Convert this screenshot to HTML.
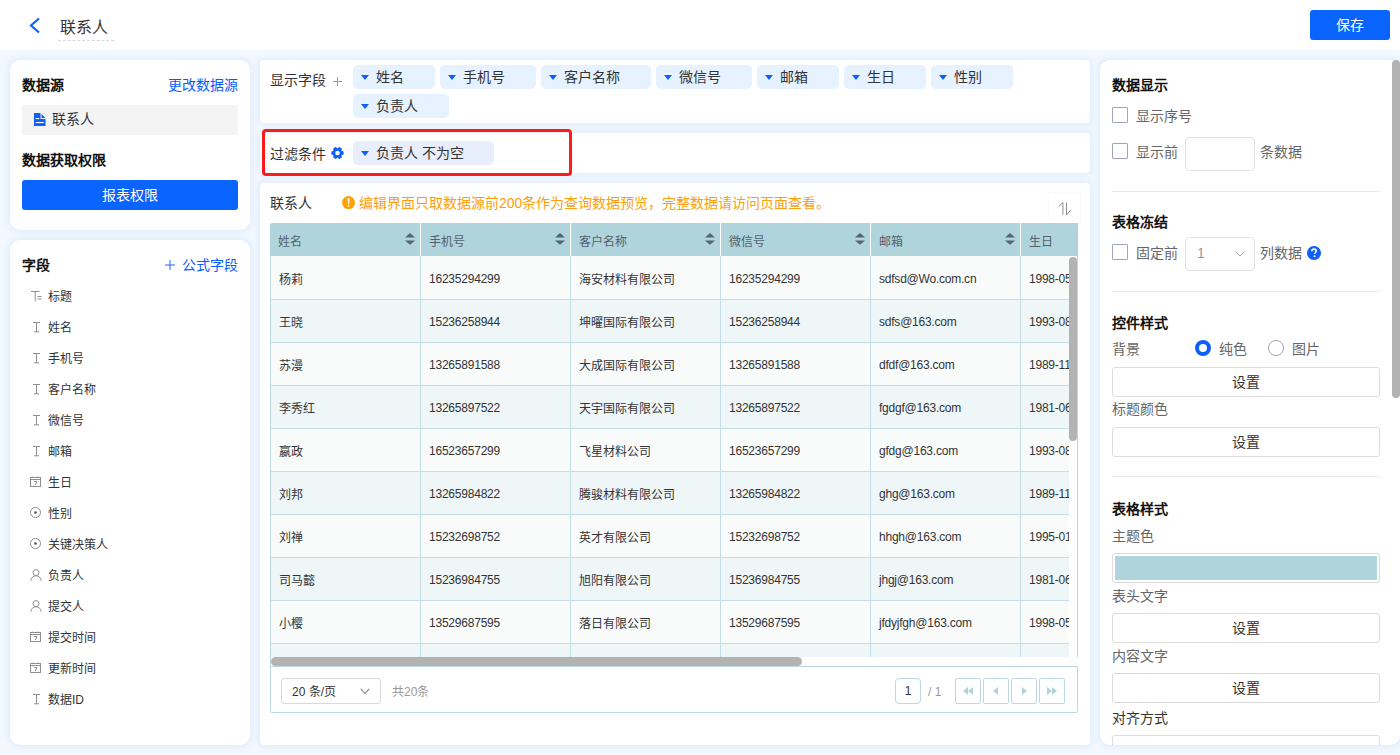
<!DOCTYPE html>
<html lang="zh-CN"><head><meta charset="utf-8">
<style>
*{box-sizing:border-box;margin:0;padding:0}
html,body{width:1400px;height:755px;overflow:hidden}
body{font-family:"Liberation Sans",sans-serif;background:#f2f8fe;color:#333;position:relative;font-size:14px}
.abs{position:absolute}
.t{position:absolute;white-space:nowrap;line-height:1}
.panel{position:absolute;background:#fff;border-radius:10px;box-shadow:0 0 6px 1px rgba(214,232,253,.9)}
.hdr{position:absolute;left:0;top:0;width:1400px;height:50px;background:#fff}
.b{font-weight:bold;color:#111}
.blue{color:#0a5cff}
.fi{position:absolute;left:20px;height:14px}
.fi svg{position:absolute;left:0;top:0}
.fi span{position:absolute;left:18px;top:1px;font-size:12px;line-height:1;white-space:nowrap;color:#333}
.tag{position:absolute;height:24px;background:#e6f2ff;border-radius:5px}
.tag i{position:absolute;left:8px;top:10px;width:0;height:0;border-left:4.5px solid transparent;border-right:4.5px solid transparent;border-top:5px solid #0f5fff}
.tag span{position:absolute;left:23px;top:5px;font-size:14px;line-height:1;color:#333;white-space:nowrap}
.th{position:absolute;top:0;height:33px;background:#afd4dc}
.th span{position:absolute;left:8px;top:13px;font-size:12px;line-height:1;color:#556070;white-space:nowrap}
.sort{position:absolute;right:5px;top:10px}
.cell{position:absolute;margin-top:1px;font-size:12px;line-height:1;color:#333;white-space:nowrap}
.num{margin-top:0;letter-spacing:-0.22px}
.chk{position:absolute;width:16px;height:16px;border:1px solid #a0a6b8;border-radius:1px;background:#fff}
.lbl{position:absolute;font-size:14px;line-height:1;color:#666;white-space:nowrap}
.btn{position:absolute;left:12px;width:268px;height:30px;border:1px solid #dcdcdc;border-radius:3px;background:#fff;text-align:center;font-size:14px;line-height:28px;color:#333}
.hr{position:absolute;left:12px;width:268px;height:1px;background:#e8e8e8}
.pbtn{position:absolute;top:11px;width:26px;height:26px;border:1px solid #bcd9e0;border-radius:2px;background:#fff}
</style></head><body>
<div class="hdr">
  <svg class="abs" style="left:28px;top:17px" width="13" height="17" viewBox="0 0 13 17"><path d="M11 1.5 L3 8.5 L11 15.5" fill="none" stroke="#0f5fff" stroke-width="2.2"/></svg>
  <div class="t" style="left:60px;top:20px;font-size:16px;color:#333">联系人</div>
  <div class="abs" style="left:58px;top:40px;width:56px;border-top:1px dashed #d9d9d9"></div>
  <div class="abs" style="left:1310px;top:10px;width:80px;height:30px;background:#0a64ff;border-radius:3px;color:#fff;font-size:14px;text-align:center;line-height:30px">保存</div>
</div>

<div class="panel" style="left:10px;top:60px;width:240px;height:170px">
  <div class="t b" style="left:12px;top:18px">数据源</div>
  <div class="t blue" style="left:158px;top:18px">更改数据源</div>
  <div class="abs" style="left:12px;top:45px;width:216px;height:30px;background:#f4f4f5;border-radius:2px"></div>
  <svg class="abs" style="left:23.5px;top:53px" width="12" height="13" viewBox="0 0 12 13"><path d="M0 0H6.5V6H11.5V13H0Z M7.5 1V5H11.5Z" fill="#0f5fff"/><rect x="1.7" y="5" width="3.5" height="1.1" fill="#fff"/><rect x="1.7" y="9" width="8" height="1.1" fill="#fff"/></svg>
  <div class="t" style="left:42px;top:52px;color:#333">联系人</div>
  <div class="t b" style="left:12px;top:93px">数据获取权限</div>
  <div class="abs" style="left:12px;top:120px;width:216px;height:30px;background:#0a64ff;border-radius:3px;color:#fff;text-align:center;line-height:30px">报表权限</div>
</div>

<div class="panel" style="left:10px;top:240px;width:240px;height:505px">
<div class="t b" style="left:12px;top:18px">字段</div>
<svg class="abs" style="left:155px;top:20px" width="10" height="10" viewBox="0 0 10 10"><path d="M5 0V10M0 5H10" stroke="#1f66ff" stroke-width="1"/></svg><div class="t blue" style="left:172px;top:18px">公式字段</div>
<div class="fi" style="top:50px"><svg width="12" height="12" viewBox="0 0 12 12"><path d="M1 1.5H9.5M5.2 1.5V11.5M7.5 6.5H11.5M7.5 9H11.5" stroke="#8f8f8f" stroke-width="1" fill="none"/></svg><span>标题</span></div>
<div class="fi" style="top:81px"><svg width="12" height="12" viewBox="0 0 12 12"><path d="M3 1.5H10M6.5 1.5V10.8M4 10.8H9" stroke="#8f8f8f" stroke-width="1" fill="none"/></svg><span>姓名</span></div>
<div class="fi" style="top:112px"><svg width="12" height="12" viewBox="0 0 12 12"><path d="M3 1.5H10M6.5 1.5V10.8M4 10.8H9" stroke="#8f8f8f" stroke-width="1" fill="none"/></svg><span>手机号</span></div>
<div class="fi" style="top:143px"><svg width="12" height="12" viewBox="0 0 12 12"><path d="M3 1.5H10M6.5 1.5V10.8M4 10.8H9" stroke="#8f8f8f" stroke-width="1" fill="none"/></svg><span>客户名称</span></div>
<div class="fi" style="top:174px"><svg width="12" height="12" viewBox="0 0 12 12"><path d="M3 1.5H10M6.5 1.5V10.8M4 10.8H9" stroke="#8f8f8f" stroke-width="1" fill="none"/></svg><span>微信号</span></div>
<div class="fi" style="top:205px"><svg width="12" height="12" viewBox="0 0 12 12"><path d="M3 1.5H10M6.5 1.5V10.8M4 10.8H9" stroke="#8f8f8f" stroke-width="1" fill="none"/></svg><span>邮箱</span></div>
<div class="fi" style="top:236px"><svg width="12" height="12" viewBox="0 0 12 12"><rect x="0.5" y="1.5" width="10" height="9" fill="none" stroke="#8f8f8f" stroke-width="1"/><path d="M0.5 3.5H10.5M3 0.5V2M8 0.5V2M4 5.5H7L5.2 9" stroke="#8f8f8f" stroke-width="1" fill="none"/></svg><span>生日</span></div>
<div class="fi" style="top:267px"><svg width="12" height="12" viewBox="0 0 12 12"><circle cx="5.5" cy="5.5" r="5" fill="none" stroke="#8f8f8f" stroke-width="1"/><circle cx="5.5" cy="5.5" r="1.3" fill="#555"/></svg><span>性别</span></div>
<div class="fi" style="top:298px"><svg width="12" height="12" viewBox="0 0 12 12"><circle cx="5.5" cy="5.5" r="5" fill="none" stroke="#8f8f8f" stroke-width="1"/><circle cx="5.5" cy="5.5" r="1.3" fill="#555"/></svg><span>关键决策人</span></div>
<div class="fi" style="top:329px"><svg width="12" height="12" viewBox="0 0 12 12"><circle cx="6" cy="3.6" r="3" fill="none" stroke="#8f8f8f" stroke-width="1"/><path d="M0.8 11.8C1.2 8.5 3.2 6.8 6 6.8S10.8 8.5 11.2 11.8" fill="none" stroke="#8f8f8f" stroke-width="1"/></svg><span>负责人</span></div>
<div class="fi" style="top:360px"><svg width="12" height="12" viewBox="0 0 12 12"><circle cx="6" cy="3.6" r="3" fill="none" stroke="#8f8f8f" stroke-width="1"/><path d="M0.8 11.8C1.2 8.5 3.2 6.8 6 6.8S10.8 8.5 11.2 11.8" fill="none" stroke="#8f8f8f" stroke-width="1"/></svg><span>提交人</span></div>
<div class="fi" style="top:391px"><svg width="12" height="12" viewBox="0 0 12 12"><rect x="0.5" y="1.5" width="10" height="9" fill="none" stroke="#8f8f8f" stroke-width="1"/><path d="M0.5 3.5H10.5M3 0.5V2M8 0.5V2M4 5.5H7L5.2 9" stroke="#8f8f8f" stroke-width="1" fill="none"/></svg><span>提交时间</span></div>
<div class="fi" style="top:422px"><svg width="12" height="12" viewBox="0 0 12 12"><rect x="0.5" y="1.5" width="10" height="9" fill="none" stroke="#8f8f8f" stroke-width="1"/><path d="M0.5 3.5H10.5M3 0.5V2M8 0.5V2M4 5.5H7L5.2 9" stroke="#8f8f8f" stroke-width="1" fill="none"/></svg><span>更新时间</span></div>
<div class="fi" style="top:453px"><svg width="12" height="12" viewBox="0 0 12 12"><path d="M3 1.5H10M6.5 1.5V10.8M4 10.8H9" stroke="#8f8f8f" stroke-width="1" fill="none"/></svg><span>数据ID</span></div>
</div>
<div class="panel" style="left:260px;top:60px;width:830px;height:63px;border-radius:4px">
<div class="t" style="left:10px;top:13px">显示字段</div><svg class="abs" style="left:73px;top:17px" width="9" height="9" viewBox="0 0 9 9"><path d="M4.5 0V9M0 4.5H9" stroke="#999" stroke-width="1"/></svg>
<div class="tag" style="left:93px;top:5px;width:82px"><i></i><span>姓名</span></div>
<div class="tag" style="left:180px;top:5px;width:96px"><i></i><span>手机号</span></div>
<div class="tag" style="left:281px;top:5px;width:110px"><i></i><span>客户名称</span></div>
<div class="tag" style="left:396px;top:5px;width:96px"><i></i><span>微信号</span></div>
<div class="tag" style="left:497px;top:5px;width:82px"><i></i><span>邮箱</span></div>
<div class="tag" style="left:584px;top:5px;width:82px"><i></i><span>生日</span></div>
<div class="tag" style="left:671px;top:5px;width:82px"><i></i><span>性别</span></div>
<div class="tag" style="left:93px;top:34px;width:96px"><i></i><span>负责人</span></div>
</div>
<div class="panel" style="left:260px;top:133px;width:830px;height:40px;border-radius:4px">
<div class="t" style="left:10px;top:14px">过滤条件</div>
<svg class="abs" style="left:71px;top:14px" width="13" height="12" viewBox="0 0 13 12"><path fill="#0f5fff" fill-rule="evenodd" d="M10.48 3.70 L12.61 4.48 L12.61 7.52 L10.48 8.30 L10.48 8.30 L10.88 10.53 L8.24 12.06 L6.50 10.60 L6.50 10.60 L4.76 12.06 L2.12 10.53 L2.52 8.30 L2.52 8.30 L0.39 7.52 L0.39 4.48 L2.52 3.70 L2.52 3.70 L2.12 1.47 L4.76 -0.06 L6.50 1.40 L6.50 1.40 L8.24 -0.06 L10.88 1.47 L10.48 3.70 Z M8.80 6 A2.3 2.3 0 1 0 4.20 6 A2.3 2.3 0 1 0 8.80 6 Z"/></svg>
<div class="tag" style="left:93px;top:8px;width:141px;background:#e8eefb"><i></i><span>负责人 不为空</span></div>
</div>
<div class="abs" style="left:262px;top:129px;width:310px;height:47px;border:3px solid #ff1a1a;border-radius:4px"></div>
<div class="panel" style="left:260px;top:183px;width:830px;height:562px;border-radius:4px">
<div class="t" style="left:10px;top:13px">联系人</div>
<svg class="abs" style="left:82px;top:13px" width="13" height="13" viewBox="0 0 13 13"><circle cx="6.5" cy="6.6" r="6.5" fill="#fda20a"/><path d="M5.6 2.2H7.6L7.1 8.3H6.1Z" fill="#fff"/><rect x="5.9" y="9.2" width="1.4" height="1.3" fill="#fff"/></svg>
<div class="t" style="left:99px;top:13px;color:#fba00c">编辑界面只取数据源前200条作为查询数据预览，完整数据请访问页面查看。</div>
<div class="abs" style="left:789px;top:10px;width:31px;height:30px;background:#fff;box-shadow:0 0 3px rgba(120,100,160,.12)"><svg class="abs" style="left:9px;top:9px" width="14" height="14" viewBox="0 0 14 14"><path d="M0.8 4.5 L4.9 0.5 V12.8 M8.5 0.5 V12.8 L12.8 8" stroke="#8c8c8c" stroke-width="1" fill="none"/></svg></div>
</div>
<div class="abs" style="left:270px;top:223px;width:808px;height:490px;overflow:hidden">
<div class="th" style="left:0px;width:150px;border-left:0;border-radius:2px 0 0 0"><span>姓名</span><svg class="sort" width="10" height="12" viewBox="0 0 10 12"><path d="M5 0 L10 4.6 H0 Z M0 7.4 H10 L5 11.8 Z" fill="#556378"/></svg></div>
<div class="th" style="left:150px;width:150px;border-left:1px solid #fff;"><span>手机号</span><svg class="sort" width="10" height="12" viewBox="0 0 10 12"><path d="M5 0 L10 4.6 H0 Z M0 7.4 H10 L5 11.8 Z" fill="#556378"/></svg></div>
<div class="th" style="left:300px;width:150px;border-left:1px solid #fff;"><span>客户名称</span><svg class="sort" width="10" height="12" viewBox="0 0 10 12"><path d="M5 0 L10 4.6 H0 Z M0 7.4 H10 L5 11.8 Z" fill="#556378"/></svg></div>
<div class="th" style="left:450px;width:150px;border-left:1px solid #fff;"><span>微信号</span><svg class="sort" width="10" height="12" viewBox="0 0 10 12"><path d="M5 0 L10 4.6 H0 Z M0 7.4 H10 L5 11.8 Z" fill="#556378"/></svg></div>
<div class="th" style="left:600px;width:150px;border-left:1px solid #fff;"><span>邮箱</span><svg class="sort" width="10" height="12" viewBox="0 0 10 12"><path d="M5 0 L10 4.6 H0 Z M0 7.4 H10 L5 11.8 Z" fill="#556378"/></svg></div>
<div class="th" style="left:750px;width:200px;border-left:1px solid #fff;"><span>生日</span></div>
<div class="abs" style="left:0;top:33px;width:799px;height:401px;overflow:hidden;border-left:1px solid #bcd9e0">
<div class="abs" style="left:0;top:0;width:900px;height:1px;background:#f9fbfb"></div>
<div class="abs" style="left:0;top:1px;width:900px;height:43px;background:#f9fbfb;border-bottom:1px solid #c3dfe5"></div>
<div class="cell" style="left:8px;top:17px">杨莉</div>
<div class="cell num" style="left:158px;top:17px">16235294299</div>
<div class="cell" style="left:308px;top:17px">海安材料有限公司</div>
<div class="cell num" style="left:458px;top:17px">16235294299</div>
<div class="cell num" style="left:608px;top:17px">sdfsd@Wo.com.cn</div>
<div class="cell num" style="left:758px;top:17px">1998-05</div>
<div class="abs" style="left:0;top:44px;width:900px;height:43px;background:#eef6f8;border-bottom:1px solid #c3dfe5"></div>
<div class="cell" style="left:8px;top:60px">王晓</div>
<div class="cell num" style="left:158px;top:60px">15236258944</div>
<div class="cell" style="left:308px;top:60px">坤曜国际有限公司</div>
<div class="cell num" style="left:458px;top:60px">15236258944</div>
<div class="cell num" style="left:608px;top:60px">sdfs@163.com</div>
<div class="cell num" style="left:758px;top:60px">1993-08</div>
<div class="abs" style="left:0;top:87px;width:900px;height:43px;background:#f9fbfb;border-bottom:1px solid #c3dfe5"></div>
<div class="cell" style="left:8px;top:103px">苏漫</div>
<div class="cell num" style="left:158px;top:103px">13265891588</div>
<div class="cell" style="left:308px;top:103px">大成国际有限公司</div>
<div class="cell num" style="left:458px;top:103px">13265891588</div>
<div class="cell num" style="left:608px;top:103px">dfdf@163.com</div>
<div class="cell num" style="left:758px;top:103px">1989-11</div>
<div class="abs" style="left:0;top:130px;width:900px;height:43px;background:#eef6f8;border-bottom:1px solid #c3dfe5"></div>
<div class="cell" style="left:8px;top:146px">李秀红</div>
<div class="cell num" style="left:158px;top:146px">13265897522</div>
<div class="cell" style="left:308px;top:146px">天宇国际有限公司</div>
<div class="cell num" style="left:458px;top:146px">13265897522</div>
<div class="cell num" style="left:608px;top:146px">fgdgf@163.com</div>
<div class="cell num" style="left:758px;top:146px">1981-06</div>
<div class="abs" style="left:0;top:173px;width:900px;height:43px;background:#f9fbfb;border-bottom:1px solid #c3dfe5"></div>
<div class="cell" style="left:8px;top:189px">嬴政</div>
<div class="cell num" style="left:158px;top:189px">16523657299</div>
<div class="cell" style="left:308px;top:189px">飞星材料公司</div>
<div class="cell num" style="left:458px;top:189px">16523657299</div>
<div class="cell num" style="left:608px;top:189px">gfdg@163.com</div>
<div class="cell num" style="left:758px;top:189px">1993-08</div>
<div class="abs" style="left:0;top:216px;width:900px;height:43px;background:#eef6f8;border-bottom:1px solid #c3dfe5"></div>
<div class="cell" style="left:8px;top:232px">刘邦</div>
<div class="cell num" style="left:158px;top:232px">13265984822</div>
<div class="cell" style="left:308px;top:232px">腾骏材料有限公司</div>
<div class="cell num" style="left:458px;top:232px">13265984822</div>
<div class="cell num" style="left:608px;top:232px">ghg@163.com</div>
<div class="cell num" style="left:758px;top:232px">1989-11</div>
<div class="abs" style="left:0;top:259px;width:900px;height:43px;background:#f9fbfb;border-bottom:1px solid #c3dfe5"></div>
<div class="cell" style="left:8px;top:275px">刘禅</div>
<div class="cell num" style="left:158px;top:275px">15232698752</div>
<div class="cell" style="left:308px;top:275px">英才有限公司</div>
<div class="cell num" style="left:458px;top:275px">15232698752</div>
<div class="cell num" style="left:608px;top:275px">hhgh@163.com</div>
<div class="cell num" style="left:758px;top:275px">1995-01</div>
<div class="abs" style="left:0;top:302px;width:900px;height:43px;background:#eef6f8;border-bottom:1px solid #c3dfe5"></div>
<div class="cell" style="left:8px;top:318px">司马懿</div>
<div class="cell num" style="left:158px;top:318px">15236984755</div>
<div class="cell" style="left:308px;top:318px">旭阳有限公司</div>
<div class="cell num" style="left:458px;top:318px">15236984755</div>
<div class="cell num" style="left:608px;top:318px">jhgj@163.com</div>
<div class="cell num" style="left:758px;top:318px">1981-06</div>
<div class="abs" style="left:0;top:345px;width:900px;height:43px;background:#f9fbfb;border-bottom:1px solid #c3dfe5"></div>
<div class="cell" style="left:8px;top:361px">小樱</div>
<div class="cell num" style="left:158px;top:361px">13529687595</div>
<div class="cell" style="left:308px;top:361px">落日有限公司</div>
<div class="cell num" style="left:458px;top:361px">13529687595</div>
<div class="cell num" style="left:608px;top:361px">jfdyjfgh@163.com</div>
<div class="cell num" style="left:758px;top:361px">1998-05</div>
<div class="abs" style="left:0;top:388px;width:900px;height:43px;background:#eef6f8;border-bottom:1px solid #c3dfe5"></div>
<div class="abs" style="left:149px;top:0;width:1px;height:401px;background:#c3dfe5"></div>
<div class="abs" style="left:299px;top:0;width:1px;height:401px;background:#c3dfe5"></div>
<div class="abs" style="left:449px;top:0;width:1px;height:401px;background:#c3dfe5"></div>
<div class="abs" style="left:599px;top:0;width:1px;height:401px;background:#c3dfe5"></div>
<div class="abs" style="left:749px;top:0;width:1px;height:401px;background:#c3dfe5"></div>
</div>
<div class="abs" style="left:799px;top:33px;width:9px;height:401px;background:#fff;border-right:1px solid #bcd9e0"></div>
<div class="abs" style="left:799px;top:34px;width:8px;height:184px;background:#b3b3b3;border-radius:4px"></div>
<div class="abs" style="left:0;top:434px;width:808px;height:9px;background:#fff;border-left:1px solid #bcd9e0"></div>
<div class="abs" style="left:1px;top:434px;width:531px;height:9px;background:#b3b3b3;border-radius:4.5px"></div>
<div class="abs" style="left:0;top:443px;width:808px;height:47px;border:1px solid #bcd9e0;border-radius:0 0 2px 2px">
<div class="abs" style="left:10px;top:11px;width:100px;height:26px;border:1px solid #d9d9d9;border-radius:3px"></div>
<div class="cell" style="left:21px;top:19px;margin-top:0;color:#333">20 条/页</div>
<svg class="abs" style="left:89px;top:21px" width="10" height="7" viewBox="0 0 10 7"><path d="M0.7 0.8 L5 5.3 L9.3 0.8" fill="none" stroke="#8c8c8c" stroke-width="1.2"/></svg>
<div class="cell" style="left:121px;top:19px;margin-top:0;color:#999">共20条</div>
<div class="abs" style="left:624px;top:11px;width:26px;height:26px;border:1px solid #bcd9e0;border-radius:4px;text-align:center;font-size:12px;line-height:24px;color:#333">1</div>
<div class="cell" style="left:657px;top:19px;margin-top:0;color:#999">/ 1</div>
<div class="pbtn" style="left:684px"><svg class="abs" style="left:5px;top:7px" width="14" height="10" viewBox="0 0 14 10"><path d="M7 1 L2 5 L7 9 Z M12 1 L7 5 L12 9 Z" fill="#b0d4dc"/></svg></div>
<div class="pbtn" style="left:712px"><svg class="abs" style="left:5px;top:7px" width="14" height="10" viewBox="0 0 14 10"><path d="M9 1 L4 5 L9 9 Z" fill="#b0d4dc"/></svg></div>
<div class="pbtn" style="left:740px"><svg class="abs" style="left:5px;top:7px" width="14" height="10" viewBox="0 0 14 10"><path d="M5 1 L10 5 L5 9 Z" fill="#b0d4dc"/></svg></div>
<div class="pbtn" style="left:768px"><svg class="abs" style="left:5px;top:7px" width="14" height="10" viewBox="0 0 14 10"><path d="M2 1 L7 5 L2 9 Z M7 1 L12 5 L7 9 Z" fill="#b0d4dc"/></svg></div>
</div>
</div>
<div class="panel" style="left:1100px;top:60px;width:300px;height:685px;overflow:hidden">
<div class="t b" style="left:12px;top:18px">数据显示</div>
<div class="chk" style="left:12px;top:47px"></div><div class="lbl" style="left:36px;top:49px">显示序号</div>
<div class="chk" style="left:12px;top:83px"></div><div class="lbl" style="left:36px;top:85px">显示前</div>
<div class="abs" style="left:85px;top:77px;width:70px;height:34px;border:1px solid #e0e0e0;border-radius:4px"></div>
<div class="lbl" style="left:160px;top:85px">条数据</div>
<div class="hr" style="top:131px"></div>
<div class="t b" style="left:12px;top:155px">表格冻结</div>
<div class="chk" style="left:12px;top:184px"></div><div class="lbl" style="left:36px;top:186px">固定前</div>
<div class="abs" style="left:85px;top:177px;width:70px;height:34px;border:1px solid #e0e0e0;border-radius:4px"></div>
<div class="lbl" style="left:97px;top:186px;color:#999">1</div>
<svg class="abs" style="left:135px;top:191px" width="10" height="6" viewBox="0 0 10 6"><path d="M0.5 0.5 L5 5 L9.5 0.5" fill="none" stroke="#aaa" stroke-width="1"/></svg>
<div class="lbl" style="left:160px;top:186px">列数据</div>
<svg class="abs" style="left:207px;top:186px" width="14" height="14" viewBox="0 0 14 14"><circle cx="7" cy="7" r="7" fill="#0f5fff"/><path d="M4.8 5.3 C4.8 3.8 5.8 3.1 7 3.1 C8.3 3.1 9.2 3.9 9.2 5 C9.2 6.4 7.6 6.6 7.6 8" fill="none" stroke="#fff" stroke-width="1.6"/><circle cx="7.5" cy="10.3" r="1" fill="#fff"/></svg>
<div class="hr" style="top:231px"></div>
<div class="t b" style="left:12px;top:256px">控件样式</div>
<div class="lbl" style="left:12px;top:282px">背景</div>
<div class="abs" style="left:95px;top:280px;width:16px;height:16px;border:4px solid #0f5fff;border-radius:50%;background:#fff"></div>
<div class="lbl" style="left:119px;top:282px">纯色</div>
<div class="abs" style="left:168px;top:280px;width:16px;height:16px;border:1px solid #a0a6b8;border-radius:50%;background:#fff"></div>
<div class="lbl" style="left:192px;top:282px">图片</div>
<div class="btn" style="top:307px">设置</div>
<div class="lbl" style="left:12px;top:342px">标题颜色</div>
<div class="btn" style="top:367px">设置</div>
<div class="hr" style="top:416px"></div>
<div class="t b" style="left:12px;top:442px">表格样式</div>
<div class="lbl" style="left:12px;top:469px">主题色</div>
<div class="abs" style="left:12px;top:493px;width:268px;height:30px;border:1px solid #dcdcdc;border-radius:3px;padding:2px"><div style="width:100%;height:100%;background:#afd4dc"></div></div>
<div class="lbl" style="left:12px;top:529px">表头文字</div>
<div class="btn" style="top:553px">设置</div>
<div class="lbl" style="left:12px;top:589px">内容文字</div>
<div class="btn" style="top:613px">设置</div>
<div class="lbl" style="left:12px;top:651px;color:#333">对齐方式</div>
<div class="btn" style="top:675px"></div>
</div>
<div class="abs" style="left:1392px;top:60px;width:8px;height:338px;background:#b3b3b3;border-radius:4px"></div>
</body></html>
